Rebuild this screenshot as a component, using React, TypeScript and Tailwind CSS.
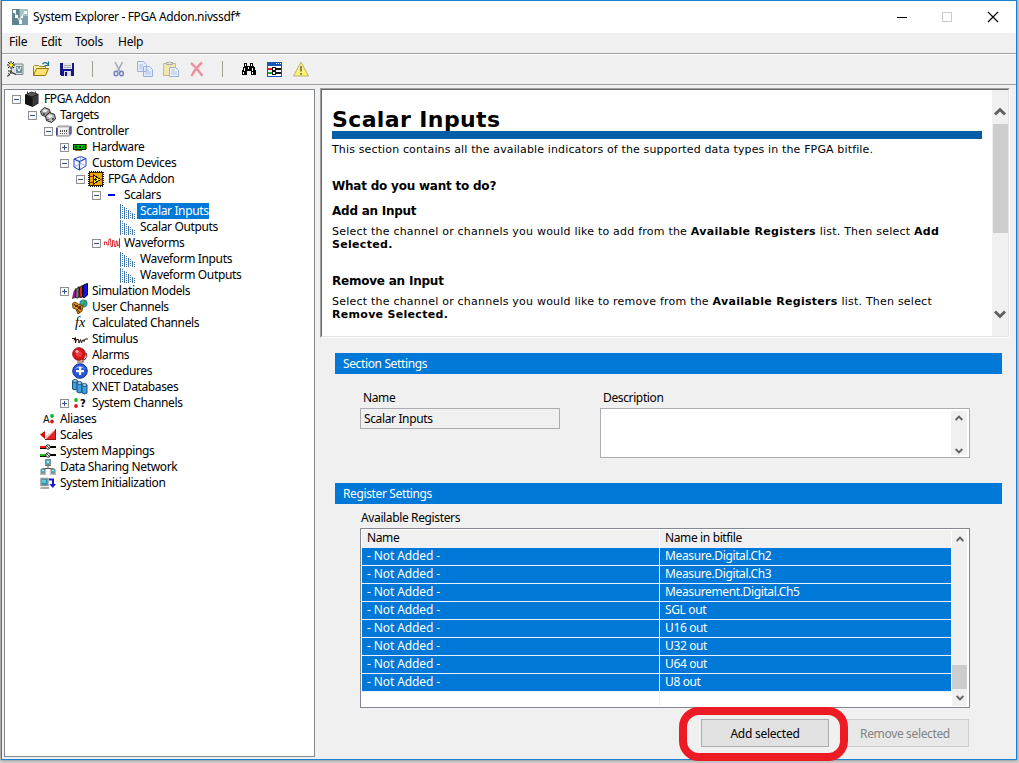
import React from "react";

type IconProps = { children: React.ReactNode; crisp?: boolean; size?: number };

function Icon({ children, crisp = false, size = 16 }: IconProps) {
  return (
    <svg
      width={size}
      height={size}
      viewBox={`0 0 ${size} ${size}`}
      fill="none"
      shapeRendering={crisp ? "crispEdges" : "auto"}
      className="block shrink-0 overflow-visible"
    >
      {children}
    </svg>
  );
}

const icons: Record<string, React.ReactNode> = {
  cube: (
    <Icon>
      <path d="M1 3.500 7.500.5 14.500 3v9.500L8.500 16 1 13Z" fill="#151515" />
      <path d="m2 3.500 5.500-2.500 6 2.200L8 5.500Z" fill="#555" />
      <path d="M8.500 6 14 3.800V12l-5.500 3.500Z" fill="#3a3a3a" />
      <path d="M3 .5h1v2H3zM11 .5h1v2h-1z" fill="#333" />
    </Icon>
  ),
  targets: (
    <Icon>
      <path d="m.5 4 4-3.500 5 2 1 4.500-4 3-5-2Z" fill="#999" stroke="#333" />
      <path d="m5.500 9 4-3.500 5 2 1 4.500-4 3.500-5-2Z" fill="#b5b5b5" stroke="#222" />
      <path d="m2 4 3-2 3 1.500-3 2Zm5 5.500 3-2 3 1.500-3 2Z" fill="#eee" />
      <path d="M3 6h2v2H3zm4 6h2v1H7zm5-1h2v2h-2z" fill="#555" />
    </Icon>
  ),
  controller: (
    <Icon>
      <path d="M.5 4.500 3 3h9.500l3 .5v7l-2 2.500H.5Z" fill="#d5d5d5" stroke="#888" />
      <path d="M2 5h9.500v7H2z" fill="#f4f4f4" />
      <path d="M1 5v7M14 4v7.500" stroke="#27278c" strokeWidth="1.300" />
      <path d="M4 7h1v2H4zm2 0h1v2H6zm2 0h1v2H8zm2 0h1v2h-1zM4 10h1v1H4zm2 0h1v1H6zm2 0h1v1H8zm2 0h1v1h-1z" fill="#555" />
    </Icon>
  ),
  hardware: (
    <Icon crisp>
      <path d="M1 5h13v6H1z" fill="#052c05" />
      <path d="M2 6h11v4H2z" fill="#00b400" />
      <path d="M3 7h2v2H3zm4 0h2v2H7zm4 0h1v2h-1z" fill="#032" />
      <path d="M14 5h1v5h-1zM3 11h7v1H3z" fill="#8a6d2b" />
    </Icon>
  ),
  custom: (
    <Icon>
      <path d="m2 4 6.500-2.500 5.500 2V11l-6.500 4L2 12Z" fill="#f4f7ff" stroke="#2142c7" />
      <path d="m2 4 5.500 2.500L14 3.500M7.500 6.500V15" stroke="#2142c7" strokeWidth="1.200" />
      <path d="m8.500 1.500.2 7L14 11M8.700 8.500 2 12" stroke="#7d9bee" strokeWidth=".8" />
    </Icon>
  ),
  fpga: (
    <Icon crisp>
      <path d="M1 1h14v14H1z" stroke="#111" strokeWidth="2" strokeDasharray="1 1" />
      <path d="M1.500 1.500h13v13h-13z" fill="#f2a600" stroke="#332400" />
      <path d="M5.500 4v9l7-4.500Z" fill="#ffe51f" stroke="#111" />
      <path d="M6 8.500h3M7.500 7v3" stroke="#111" />
      <path d="M2 5.500h3M2 11.500h3M12 8.500h2" stroke="#b01818" />
    </Icon>
  ),
  scalars: (
    <Icon crisp>
      <path d="M4 7h7v2H4z" fill="#0000f5" />
    </Icon>
  ),
  channels: (
    <Icon crisp>
      <path d="M.5 1v15M4.500 4v12M8.500 7v9M12.500 10v6" stroke="#4276a8" />
      <path d="M2.500 2v14M6.500 5v11M10.500 8v8M14.500 11v5" stroke="#4276a8" strokeDasharray="1 1" />
    </Icon>
  ),
  waveforms: (
    <Icon>
      <path
        d="M.5 10V7h2l.5 3h1.500l.5-6h1.500L7 11.500h1.500V5.500H10l.5 6H12V6h1l.5 4.500h1.500l.5-7V13"
        stroke="#d11d25"
        strokeWidth=".9"
      />
    </Icon>
  ),
  models: (
    <Icon>
      <path d="m.5 15.500 1.500-7 2-3-1 9Z" fill="#d000c9" stroke="#311" strokeWidth=".7" />
      <path d="m3.500 14.500.5-8 3-3 .5 10-2 1.500Z" fill="#777" stroke="#111" />
      <path d="m7 14 .5-9.500 3-2 .5 11-2 1Z" fill="#d82020" stroke="#111" />
      <path d="m10.500 14 1-12 4-1.500V12l-3 2.500Z" fill="#1414dd" stroke="#000" />
    </Icon>
  ),
  user: (
    <Icon>
      <circle cx="11.500" cy="4.500" r="4" fill="#2389b4" />
      <path d="m9 2 3-1 1 2-2 3-2-1Zm4 3 2-1-1 3-2 1Z" fill="#36b84b" />
      <path d="M.5 4.500 3 3l3 2 5 2-1 5-4 3-2-5-3-1Z" fill="#e78d1d" stroke="#70400a" />
      <path d="m2 5 2 3 1-2 2 4 1-3 1 4M5 10l3 4" stroke="#302000" />
    </Icon>
  ),
  fx: (
    <Icon>
      <text x="3" y="12" fill="#000" className="font-['Liberation_Serif',serif] text-[14px] tracking-[0] italic">fx</text>
    </Icon>
  ),
  stimulus: (
    <Icon>
      <path d="M0 7.500h3M2 9.500l1.500-3v5.500l1-3.500h2L7 12l1.500-3.500L9.500 12l1-3h1l.5 1.500 1-2.500h3" stroke="#24140f" />
    </Icon>
  ),
  alarms: (
    <Icon>
      <path d="m10 11 3 2m-8 2h6v-3" stroke="#833" strokeWidth="1.200" />
      <circle cx="7" cy="7" r="6.300" fill="#d9131a" stroke="#8e1014" />
      <circle cx="7" cy="7" r="3" fill="#ec3b3e" />
      <circle cx="5" cy="4.500" r="1.700" fill="#ffa9a5" />
      <path d="M14.500 6q1.500 4-2 7" stroke="#8b2828" />
    </Icon>
  ),
  procedures: (
    <Icon>
      <circle cx="8" cy="8" r="7.300" fill="#2855db" stroke="#1c3185" />
      <path d="M2.500 6q5-6 11 0-5-2-11 0" fill="#89a9fa" />
      <path d="M7 4h2.200v3H12v2.200H9.200V12H7V9.200H4V7h3Z" fill="#fff" />
    </Icon>
  ),
  xnet: (
    <Icon>
      <g fill="#3fa0dc" stroke="#124371" strokeWidth=".9">
        <path d="M.5 2v8q2.500 2 5 0V2" />
        <ellipse cx="3" cy="2" rx="2.500" ry="1.400" fill="#a4dcf2" />
        <path d="M5 4v9q2.500 2 5 0V4" />
        <ellipse cx="7.500" cy="4" rx="2.500" ry="1.400" fill="#a4dcf2" />
        <path d="M10 6v8q2.500 2 5 0V6" />
        <ellipse cx="12.500" cy="6" rx="2.500" ry="1.400" fill="#a4dcf2" />
      </g>
    </Icon>
  ),
  system: (
    <Icon>
      <circle cx="4" cy="5" r="1.900" fill="#11bd19" />
      <circle cx="4" cy="11" r="1.900" fill="#d71920" />
      <text x="8" y="12" fill="#000" className="font-['DejaVu_Sans',sans-serif] text-[10px] font-bold">?</text>
    </Icon>
  ),
  aliases: (
    <Icon>
      <text x="3" y="12" fill="#111" className="font-['Liberation_Sans',sans-serif] text-[10px]">A</text>
      <circle cx="12" cy="5" r="1.900" fill="#10b51b" />
      <circle cx="12" cy="10.500" r="1.900" fill="#d71920" />
    </Icon>
  ),
  scales: (
    <Icon>
      <path d="M0 7.500 5 4v8Z" fill="#c11" />
      <path d="M16 2v11H5Z" fill="#e5252b" />
      <path d="M5.500 12V9L15 2.500Z" fill="#f6c7bd" />
      <path d="M5 12.500h10.500V2" stroke="#9a1111" />
    </Icon>
  ),
  mappings: (
    <Icon>
      <path d="M0 3h6v2H0z" fill="#ef1717" />
      <path d="M0 11h6v2H0z" fill="#21b719" />
      <path d="M10 4h6M10 12h6" stroke="#000" strokeWidth="2" />
      <path d="M0 5.500h6M0 13.500h6" stroke="#111" />
      <circle cx="8" cy="4" r="2.200" fill="#fff" stroke="#222" />
      <circle cx="8" cy="12" r="2.200" fill="#fff" stroke="#222" />
      <path d="m6.500 2.500 3 3M6.500 10.500l3 3" stroke="#222" strokeWidth=".8" />
    </Icon>
  ),
  network: (
    <Icon>
      <path d="M8 6v4M3 11v-1.500h10V11" stroke="#555" />
      <g fill="#49aec6" stroke="#7b8a91">
        <path d="M5.500.5h5v5h-5zM1 10h4v4H1zM11 10h4v4h-4z" />
      </g>
      <path d="M7 2h2v2H7zM2 11h2v1H2zm10 0h2v1h-2z" fill="#adf2f2" />
      <path d="M5 6.500h6M0 15h6M10 15h6" stroke="#777" />
    </Icon>
  ),
  init: (
    <Icon>
      <path d="M1 3.500h7v7H1z" fill="#2791a9" stroke="#999" strokeWidth="1.500" />
      <path d="M2 5h4v3H2z" fill="#65c8d8" />
      <path d="M1 12h8v2H0z" fill="#aaa" />
      <path d="M9 4.500h4v6" stroke="#1515dc" strokeWidth="2" />
      <path d="M9.500 9h6.500l-3.200 4Z" fill="#1515dc" />
    </Icon>
  ),
};

type Node = { level: number; label: string; icon: string; box?: "+" | "-"; selected?: boolean };

const nodes: Node[] = [
  { level: 0, label: "FPGA Addon", icon: "cube", box: "-" },
  { level: 1, label: "Targets", icon: "targets", box: "-" },
  { level: 2, label: "Controller", icon: "controller", box: "-" },
  { level: 3, label: "Hardware", icon: "hardware", box: "+" },
  { level: 3, label: "Custom Devices", icon: "custom", box: "-" },
  { level: 4, label: "FPGA Addon", icon: "fpga", box: "-" },
  { level: 5, label: "Scalars", icon: "scalars", box: "-" },
  { level: 6, label: "Scalar Inputs", icon: "channels", selected: true },
  { level: 6, label: "Scalar Outputs", icon: "channels" },
  { level: 5, label: "Waveforms", icon: "waveforms", box: "-" },
  { level: 6, label: "Waveform Inputs", icon: "channels" },
  { level: 6, label: "Waveform Outputs", icon: "channels" },
  { level: 3, label: "Simulation Models", icon: "models", box: "+" },
  { level: 3, label: "User Channels", icon: "user" },
  { level: 3, label: "Calculated Channels", icon: "fx" },
  { level: 3, label: "Stimulus", icon: "stimulus" },
  { level: 3, label: "Alarms", icon: "alarms" },
  { level: 3, label: "Procedures", icon: "procedures" },
  { level: 3, label: "XNET Databases", icon: "xnet" },
  { level: 3, label: "System Channels", icon: "system", box: "+" },
  { level: 1, label: "Aliases", icon: "aliases" },
  { level: 1, label: "Scales", icon: "scales" },
  { level: 1, label: "System Mappings", icon: "mappings" },
  { level: 1, label: "Data Sharing Network", icon: "network" },
  { level: 1, label: "System Initialization", icon: "init" },
];

const indent = ["w-0", "w-4", "w-8", "w-12", "w-16", "w-20", "w-24"];

function TreeRow({ node }: { node: Node }) {
  return (
    <div className="flex h-4 items-center">
      <div className={`shrink-0 ${indent[node.level]}`} />
      <div className="flex w-3 shrink-0 items-center">
        {node.box && (
          <Icon crisp size={9}>
            <path d="M.5.5h8v8h-8z" fill="#f8f8f8" stroke="#919191" />
            <path d={node.box === "+" ? "M2 4.500h5M4.500 2v5" : "M2 4.500h5"} stroke="#34508f" />
          </Icon>
        )}
      </div>
      {icons[node.icon]}
      <span className={`ml-px h-4 pl-[3px] leading-4 ${node.selected ? "bg-[#0078d7] text-white" : ""}`}>
        {node.label}
      </span>
    </div>
  );
}

function Tree() {
  return (
    <div className="h-[668px] w-[311px] shrink-0 border border-[#828790] bg-white pt-px pl-[7px]">
      {nodes.map((n, i) => (
        <TreeRow key={i} node={n} />
      ))}
    </div>
  );
}

function TitleBar() {
  return (
    <div className="flex h-8 items-center bg-white pl-[10px]">
      <Icon>
        <path d="M0 0h16v16H0z" fill="#7d9fa9" />
        <path d="M0 0h7v16H0z" fill="#5d818d" />
        <path d="M8 0h8v7H8z" fill="#a5c1c8" />
        <path d="m2 2 2.500 5L8 12l1-4 4-5M8 12v2" stroke="#d5e4e7" strokeWidth="1.200" />
        <path d="M1 1h3v3H1zm2 5h3v3H3zm4 5h3v4H7zm2-4h2v2H9zm3-5h3v3h-3z" fill="#fff" />
      </Icon>
      <span className="ml-[5px] tracking-[-0.36px]">System Explorer - FPGA Addon.nivssdf*</span>
      <div className="ml-auto flex pr-[17px]">
        <Icon size={12} crisp>
          <path d="M1 6.500h10" stroke="#000" />
        </Icon>
        <div className="w-[33px]" />
        <Icon size={12} crisp>
          <path d="M1.500 1.500h9v9h-9z" stroke="#ccc" />
        </Icon>
        <div className="w-[34px]" />
        <Icon size={12}>
          <path d="m1 1 10 10M11 1 1 11" stroke="#000" strokeWidth="1.200" />
        </Icon>
      </div>
    </div>
  );
}

function ToolBar() {
  return (
    <div className="flex h-[31px] items-center border-t border-b border-t-white border-b-[#a0a0a0] pb-[2px] pl-[5px]">
      <Icon>
        <path d="M6 3h10v10.500H9L4 11Z" fill="#d8e1e4" stroke="#7d8990" />
        <path d="M9 5h6v7H9z" fill="#6f929d" />
        <path d="m10 6 2 4 2-4" stroke="#fff" />
        <path d="M4 0v8M0 4h8M1 1l6 6M7 1 1 7" stroke="#111" />
        <path d="M4 2v4M2 4h4" stroke="#ffe91c" strokeWidth="2" />
        <path d="M1 10h3.500L3 12h3l3 1.500M1 12.500l2 1L1 15H0" stroke="#222" />
      </Icon>
      <div className="w-[10px]" />
      <Icon>
        <path d="M.5 14.500v-9l1-1h4l1 1h6v2" fill="#fff2a6" stroke="#998019" />
        <path d="m.5 14.500 3-7h12l-3 7Z" fill="#ffe371" stroke="#957400" />
        <path d="M9.500 3q3-3 5.500.5M15.500.5v4h-4" stroke="#1b7187" strokeWidth="1.200" />
      </Icon>
      <div className="w-[10px]" />
      <Icon crisp>
        <path d="M1 2h14v13H2l-1-1Z" fill="#151488" />
        <path d="M4 2h9v6H4z" fill="#e5e5ef" />
        <path d="M5 4h7M5 6h7" stroke="#aaa" />
        <path d="M5 10h7v5H5z" fill="#ddd" />
        <path d="M6 11h2v4H6z" fill="#151488" />
      </Icon>
      <div className="mr-[17px] ml-[17px] h-4 w-px bg-[#a3a08f]" />
      <Icon>
        <path d="m5 1 5 9.500M12.500 1 7.500 10.500" stroke="#a3a9b5" strokeWidth="1.600" />
        <ellipse cx="6" cy="12.500" rx="1.900" ry="2.300" stroke="#6b7fc5" strokeWidth="1.400" />
        <ellipse cx="11.500" cy="12.500" rx="1.900" ry="2.300" stroke="#6b7fc5" strokeWidth="1.400" />
      </Icon>
      <div className="w-[11px]" />
      <Icon>
        <path d="M.5.5h6l3 3v7h-9ZM6.500 5.500h6l3 3v7h-9Z" fill="#e5edfb" stroke="#9aafdd" />
        <path d="M2 4h4M2 6h4M2 8h4M8 9h4M8 11h6M8 13h6" stroke="#adc0ea" />
      </Icon>
      <div className="w-[10px]" />
      <Icon>
        <path d="M.5 2.500h12v12H.5z" fill="#f1e6ac" stroke="#c9b983" />
        <path d="M3.500 3.500v-2h2l1-1 1 1h2v2Z" fill="#ddd" stroke="#aaa" />
        <path d="M6.500 6.500h6l3 3v6h-9Z" fill="#edf3ff" stroke="#9cafd8" />
        <path d="M8 9h4M8 11h6M8 13h6" stroke="#b1c1e4" />
      </Icon>
      <div className="w-[10px]" />
      <Icon>
        <path d="M2 2q6 5 11.500 13M13 1.500Q6.500 7 2.500 15" stroke="#ed919e" strokeWidth="2.300" />
      </Icon>
      <div className="mr-[18px] ml-[17px] h-4 w-px bg-[#a3a08f]" />
      <Icon crisp>
        <path d="M3 2h3v3h3V2h3v3h1l2 5v4h-5v-4H6v4H1v-4l2-5Z" fill="#000" />
        <path d="M4 3h1v2H4zM10 3h1v2h-1zM3 7h1v3H3zM2 11h1v2H2zM7 6h1v2H7zM11 7h1v3h-1zM11 11h1v2h-1z" fill="#fff" />
      </Icon>
      <div className="w-[9px]" />
      <Icon crisp>
        <path d="M1 1h15v15H1z" fill="#1556b8" />
        <path d="M2 5h13v10H2z" fill="#fff" />
        <path d="M10 2h1v1h-1zM12 2h1v1h-1zM14 2h1v1h-1z" fill="#fff" />
        <path d="M2 8h5" stroke="#e11" strokeWidth="2" />
        <path d="M2 12h5" stroke="#1a3" strokeWidth="2" />
        <path d="M10 8h5M10 12h5" stroke="#111" strokeWidth="2" />
        <path d="M6.500 6.500h3v3h-3zM6.500 10.500h3v3h-3z" stroke="#111" />
      </Icon>
      <div className="w-[11px]" />
      <Icon>
        <path d="m8 1 7.500 14H.5Z" fill="#fbf36a" stroke="#b9b27a" strokeLinejoin="round" />
        <path d="M8 5v5.500M8 12v1.800" stroke="#777" strokeWidth="1.800" />
      </Icon>
    </div>
  );
}

function Chevron({ down = false, big = false }: { down?: boolean; big?: boolean }) {
  return (
    <svg width={big ? 12 : 8} height={big ? 9 : 6} viewBox="0 0 12 9" fill="none" className="block shrink-0">
      <path d={down ? "m1 1.500 5 5 5-5" : "m1 7.500 5-5 5 5"} stroke="#606060" strokeWidth="2.800" />
    </svg>
  );
}

function HelpPanel() {
  return (
    <div className="flex h-[250px] w-[690px] border-t border-r border-b border-l border-t-[#a0a0a0] border-r-white border-b-white border-l-[#a0a0a0]">
      <div className="flex w-full border-t border-r border-b border-l border-t-[#696969] border-r-[#e3e3e3] border-b-[#e3e3e3] border-l-[#696969] bg-white">
        <div className="w-[670px] shrink-0 pt-4 pl-[10px] font-['DejaVu_Sans',Verdana,sans-serif] text-[11px] leading-[13px] tracking-[0.22px]">
          <h1 className="h-[25px] w-[650px] text-[22px] leading-[28px] font-bold tracking-[0.38px]">Scalar Inputs</h1>
          <div className="h-2 w-[650px] bg-[#065fa6]" />
          <p className="mt-[4px] tracking-[0.14px]">
            This section contains all the available indicators of the supported data types in the FPGA bitfile.
          </p>
          <h2 className="mt-[23px] text-[12px] leading-[15px] font-bold tracking-[-0.22px]">What do you want to do?</h2>
          <h3 className="mt-[10px] text-[12px] leading-[15px] font-bold tracking-[-0.25px]">Add an Input</h3>
          <p className="mt-[6px]">
            Select the channel or channels you would like to add from the{" "}
            <b className="tracking-[0.3px]">Available Registers</b> list. Then select{" "}
            <b className="tracking-[0.3px]">Add</b>
            <br />
            <b className="tracking-[0.3px]">Selected.</b>
          </p>
          <h3 className="mt-[23px] text-[12px] leading-[15px] font-bold tracking-[-0.22px]">Remove an Input</h3>
          <p className="mt-[6px]">
            Select the channel or channels you would like to remove from the{" "}
            <b className="tracking-[0.3px]">Available Registers</b> list. Then select
            <br />
            <b className="tracking-[0.3px]">Remove Selected.</b>
          </p>
        </div>
        <div className="flex w-4 shrink-0 flex-col items-center bg-[#f0f0f0] pt-[17px] pb-[17px]">
          <Chevron big />
          <div className="mt-2 ml-px h-[109px] w-[15px] bg-[#cdcdcd]" />
          <div className="mt-auto">
            <Chevron big down />
          </div>
        </div>
      </div>
    </div>
  );
}

const registers = [
  "Measure.Digital.Ch2",
  "Measure.Digital.Ch3",
  "Measurement.Digital.Ch5",
  "SGL out",
  "U16 out",
  "U32 out",
  "U64 out",
  "U8 out",
];

function SectionBar({ title }: { title: string }) {
  return <div className="ml-[15px] h-[21px] w-[667px] bg-[#0078d7] pl-2 leading-[22px] text-white">{title}</div>;
}

function RegisterTable() {
  return (
    <div className="ml-10 flex h-[180px] w-[610px] border border-[#828790] bg-white py-px pl-px">
      <div className="mr-px w-[589px] shrink-0">
        <div className="flex h-[18px] bg-[#f0f0f0] leading-[16px]">
          <div className="h-full w-[298px] shrink-0 border-r border-white pl-[5px]">Name</div>
          <div className="pl-[5px]">Name in bitfile</div>
        </div>
        {registers.map((r) => (
          <div key={r} className="flex h-[18px] border-b border-[#e6f1fb] bg-[#0078d7] leading-[16px] text-white">
            <div className="w-[298px] shrink-0 border-r border-[#e6f1fb] pl-[5px] tracking-[-0.1px]">- Not Added -</div>
            <div className="pl-[5px]">{r}</div>
          </div>
        ))}
        <div className="h-[14px] w-[298px] border-r border-[#f0f0f0]" />
      </div>
      <div className="flex w-[15px] shrink-0 flex-col items-center bg-[#f0f0f0] pt-[6px] pb-[5px]">
        <Chevron />
        <div className="mt-auto mb-[6px] h-6 w-[15px] bg-[#cdcdcd]" />
        <Chevron down />
      </div>
    </div>
  );
}

function Settings() {
  return (
    <div className="flex flex-col pt-[15px]">
      <SectionBar title="Section Settings" />
      <div className="mt-[16px] flex">
        <div className="ml-10 w-[240px]">
          <div className="h-[18px] pl-[3px] leading-[16px]">Name</div>
          <div className="h-[21px] w-[200px] border border-[#abadb3] pl-[3px] leading-[19px]">Scalar Inputs</div>
        </div>
        <div>
          <div className="h-[18px] pl-[3px] leading-[16px]">Description</div>
          <div className="flex h-[50px] w-[370px] justify-end border border-[#abadb3] bg-white py-[2px] pr-[2px]">
            <div className="flex w-4 flex-col items-center justify-between bg-[#f0f0f0] pt-1 pb-px">
              <Chevron />
              <Chevron down />
            </div>
          </div>
        </div>
      </div>
      <div className="mt-[25px]">
        <SectionBar title="Register Settings" />
      </div>
      <div className="ml-[41px] h-6 leading-[28px]">Available Registers</div>
      <RegisterTable />
      <div className="relative mt-[11px] flex gap-3 pl-[381px]">
        <button className="h-[28px] w-[128px] border border-[#adadad] bg-[#e1e1e1] pt-px tracking-[-0.25px]">Add selected</button>
        <button className="h-[28px] w-[128px] border border-[#cccccc] bg-[#e8e8e8] pt-px tracking-[-0.35px] text-[#838383]">
          Remove selected
        </button>
        <div className="absolute top-[-12px] left-[359px] h-[54px] w-[169px] rounded-[20px] border-8 border-[#ed1c24]" />
      </div>
    </div>
  );
}

export default function App() {
  return (
    <div className="h-[763px] w-[1019px] overflow-hidden bg-[#cfcfcf] pl-px font-['Noto_Sans','Open_Sans',sans-serif] text-[12px] leading-[16px] tracking-[-0.37px] whitespace-nowrap text-black">
      <div className="h-[760px] w-[1016px] border border-[#1a80d2] bg-[#f0f0f0] shadow-[0_0_3px_#777]">
        <TitleBar />
        <div className="flex h-[21px] items-start border-b border-[#a0a0a0] pl-[7px] leading-[18px] tracking-[-0.25px]">
          <span className="w-8">File</span>
          <span className="w-[34px]">Edit</span>
          <span className="w-[43px]">Tools</span>
          <span>Help</span>
        </div>
        <ToolBar />
        <div className="flex">
          <div className="pt-1 pl-[2px]">
            <Tree />
          </div>
          <div className="ml-[5px] pt-[3px]">
            <HelpPanel />
            <Settings />
          </div>
        </div>
      </div>
    </div>
  );
}
